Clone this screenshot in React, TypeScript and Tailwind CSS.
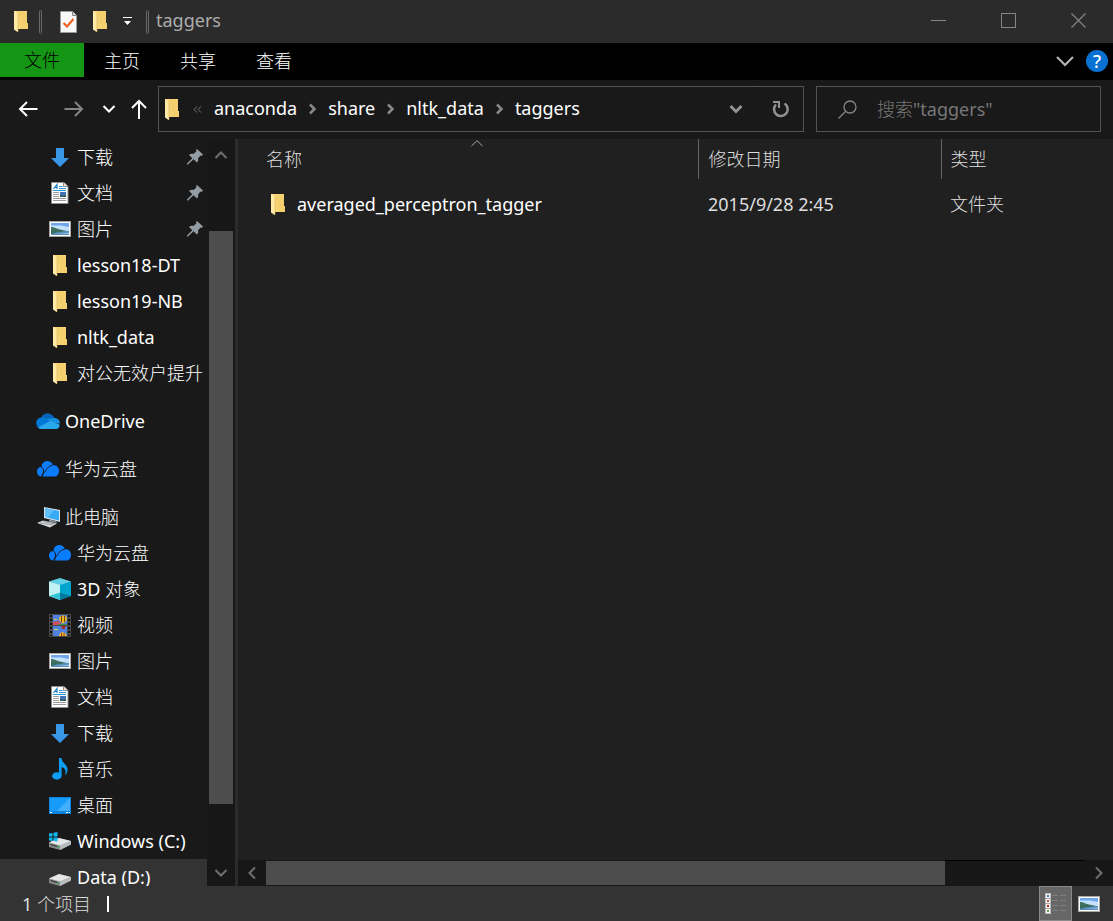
import React from "react";

type IconProps = { className?: string };

function FolderIcon() {
  return (
    <svg width="14" height="21" viewBox="0 0 14 21" aria-hidden="true">
      <path d="M1 0H13V12H14V18H1Z" fill="#f6d577" />
      <path d="M4 1H13V12H14V18H9Z" fill="#efc963" opacity="0.5" />
      <path d="M0 0H1L4 3V20.5L3.5 21L0 18.5Z" fill="#ffe9a6" />
      <path d="M4 3V20.5" stroke="#dcb455" strokeWidth="0.6" />
    </svg>
  );
}

function DownloadIcon() {
  return (
    <svg width="18" height="19" viewBox="0 0 18 19" aria-hidden="true">
      <path d="M5 0H13V10H18L9 19L0 10H5Z" fill="#3a97e8" />
    </svg>
  );
}

function DocumentIcon() {
  return (
    <svg width="18" height="22" viewBox="0 0 18 22" aria-hidden="true">
      <path d="M0.5 0.5H13L17 4.5V21.5H0.5Z" fill="#fff" stroke="#8d8d8d" />
      <path d="M12.5 0.5V4.5H16.5" fill="#e3e3e3" stroke="#8d8d8d" />
      <path d="M2.5 7L6 2.5V7M4 5.5H6" stroke="#1583c9" strokeWidth="1.2" fill="none" />
      <path d="M8 4.5H11.5M8 6.5H15M2 8.5H15" stroke="#2a93d8" strokeWidth="1" />
      <path d="M2 10.5H8M2 12.5H8M2 14.500H8M2 16.5H15M2 18.5H15" stroke="#9b9b9b" />
      <rect x="9" y="10" width="6" height="5" fill="#4273b5" />
      <path d="M9 13L12 14L15 13V15H9Z" fill="#2f5a48" />
    </svg>
  );
}

function PictureIcon() {
  return (
    <svg width="22" height="16" viewBox="0 0 22 16" aria-hidden="true">
      <rect x="0.5" y="0.5" width="21" height="15" fill="#fff" stroke="#a8a8a8" />
      <rect x="2" y="2" width="18" height="7" fill="#6ea7ee" />
      <path d="M2 4.500H12L20 6V10H2Z" fill="#c5e2fa" />
      <path d="M2 6C6 6 8 8.500 16 9.500L20 10.500H2Z" fill="#3f7262" />
      <rect x="2" y="10" width="18" height="4" fill="#568fbd" />
      <path d="M2 9H10L15 10.500L7 11.500L2 13Z" fill="#3c6c5c" />
      <path d="M8 13H20V11.500Z" fill="#8fbada" />
    </svg>
  );
}

function OneDriveIcon() {
  return (
    <svg width="24" height="16" viewBox="0 0 24 16" aria-hidden="true">
      <path d="M5 5C7-1 15-1.500 18.500 5L14 10L5 7Z" fill="#0364b8" />
      <path d="M18 5C22 5 24 7.500 24 10.500L13 10.500L10 6Z" fill="#1490df" />
      <path d="M5.500 4.500C9 4 11 5.500 14 9L3 15.200C-1 13-1 5 5.500 4.500Z" fill="#0078d4" />
      <path d="M14 8L23.500 11.500C24 14 22 16 19.500 16H5C4 16 3 15.500 2 14.500Z" fill="#28a8ea" />
    </svg>
  );
}

function HuaweiCloudIcon() {
  return (
    <svg width="22" height="16" viewBox="0 0 22 16" aria-hidden="true">
      <path
        d="M4.500 6C5-1 13.500-2 16 4C20 4 22 7 22 10C22 13.500 20 15.500 17 15.500H5C2 15.500 0 13.500 0 10.500C0 8 1.500 6 4.500 6Z"
        fill="#0a7dff"
      />
      <path
        d="M3.500 5.500C5.500 6.500 6.800 8 6.500 11L4.500 15.500M16 4C11 4.500 9.500 9 6.500 12.500L5 16"
        stroke="#191919"
        strokeWidth="1"
        fill="none"
      />
    </svg>
  );
}

function ComputerIcon() {
  return (
    <svg width="24" height="22" viewBox="0 0 24 22" aria-hidden="true">
      <path d="M8 1L24 4V16L8 12Z" fill="#d9e2e8" />
      <path d="M9 2L23 5V14.500L9 11Z" fill="#35abf5" />
      <path d="M9 2L18 4L12 11.700L9 11Z" fill="#7fcbfa" opacity="0.6" />
      <path d="M13 13.500L20 15L21 17L13 15.500Z" fill="#8b9399" />
      <path d="M1 17L7 14.500L21 17.500L14 21.500Z" fill="#d6d9dc" />
      <path d="M4 17L17 19M7 15.500L19 18" stroke="#858d93" strokeWidth="0.7" />
    </svg>
  );
}

function CubeIcon() {
  return (
    <svg width="22" height="22" viewBox="0 0 22 22" aria-hidden="true">
      <path d="M11 0L22 3.500L11 8L0 3.500Z" fill="#61d0e6" />
      <path d="M0 3.500L11 7V22L0 18Z" fill="#bff0f2" />
      <path d="M11 7L22 3.500V18L11 22Z" fill="#00a5cf" />
      <path d="M11 14.500L22 18L11 22Z" fill="#007a9c" />
      <path d="M11 14.500V22L0 18Z" fill="#36c3d6" />
    </svg>
  );
}

function VideoIcon() {
  return (
    <svg width="22" height="23" viewBox="0 0 22 23" aria-hidden="true">
      <rect width="22" height="23" fill="#4a4a4a" />
      <rect x="4" y="1" width="14" height="10" fill="#4f83df" />
      <rect x="4" y="12" width="14" height="10" fill="#4f83df" />
      <path d="M4 8L9 7L14 11H4Z" fill="#d34d5c" />
      <path d="M10 10H18V11H8Z" fill="#3b8f4b" />
      <path d="M10 4.500C10.500 0.500 17.500 0.500 18 4.500C18 7 16 8.500 14 9.500C12 8.500 10 7 10 4.500Z" fill="#e8ba22" />
      <path d="M12.500 2V8M15.500 2V8" stroke="#7d3817" />
      <path d="M12 12H17L15.500 15H13.500Z" fill="#a92820" />
      <path d="M10 22C10 17 17 17 17.500 22Z" fill="#edc02c" />
      <path d="M12.500 19V22M15 19V22" stroke="#a22c20" />
      <path d="M5 15.500H9M5 5.500H8" stroke="#d7d45c" strokeWidth="1" />
      <path d="M2 1V22M20 1V22" stroke="#111" strokeWidth="2" strokeDasharray="2 2" />
    </svg>
  );
}

function MusicIcon() {
  return (
    <svg width="16" height="22" viewBox="0 0 16 22" aria-hidden="true">
      <ellipse cx="4.800" cy="18" rx="4.800" ry="3.700" fill="#0c9df4" />
      <path d="M7 0H9.500C9.500 5 16 6.500 15.500 12C15.300 14.500 14.500 16 13 17.500C14.500 12.500 13 10 9.600 9V18H7Z" fill="#0c9df4" />
    </svg>
  );
}

function DesktopIcon() {
  return (
    <svg width="22" height="17" viewBox="0 0 22 17" aria-hidden="true">
      <rect width="22" height="17" fill="#0c83dc" />
      <rect x="1" y="1" width="20" height="13" fill="#169bfa" />
      <path d="M21 1V14H8Z" fill="#43b0ff" />
      <path d="M1 15.500H3M17 15.500H19M20 15.500H21" stroke="#fff" />
    </svg>
  );
}

function DriveIcon({ windows = false }: { windows?: boolean }) {
  return (
    <svg width="22" height="18" viewBox="0 0 22 18" aria-hidden="true">
      <path d="M0 10.500L10 6L22 9V12.500L11 18L0 15Z" fill="#858889" />
      <path d="M0 10.500L10 6L22 9L11 13.500Z" fill="#e4e6e8" />
      <path d="M11 13.500L22 9V12.500L11 18Z" fill="#b9bcbe" />
      <path d="M1.500 12.500L8 14.500" stroke="#303030" strokeWidth="1.200" />
      <path d="M8.500 15H10" stroke="#22b83a" strokeWidth="1.400" />
      {windows && (
        <path d="M0 1.500L3.500 1V4.500H0ZM4.500 0.800L8.500 0V4.500H4.500ZM0 5.500H3.500V9L0 8.500ZM4.500 5.500H8.500V9.500L4.500 9Z" fill="#12b9f0" />
      )}
    </svg>
  );
}

function PinIcon() {
  return (
    <svg width="16" height="16" viewBox="0 0 16 16" className="shrink-0" aria-hidden="true">
      <path d="M10 0L16 5.500L14.500 7L13.500 6.500L11 9.500C11.500 11 11 12.500 10 13.500L6.500 10.200L1 15.500L0 15.500V14.500L5.300 9.200L2 6C3.200 5 5 4.500 6.500 5L9.500 2.300L9 1Z" fill="#939ca3" />
    </svg>
  );
}

function Chevron({ className }: IconProps) {
  return (
    <svg width="14" height="14" viewBox="0 0 14 14" className={className} fill="none" stroke="currentColor" aria-hidden="true">
      <path d="M1.500 4L7 9.500L12.500 4" />
    </svg>
  );
}

function CrumbArrow() {
  return (
    <svg width="31" height="12" viewBox="0 0 31 12" fill="none" stroke="#898989" strokeWidth="2.500" aria-hidden="true">
      <path d="M13 1.500L17.500 6L13 10.500" />
    </svg>
  );
}

function ArrowIcon({ className }: IconProps) {
  return (
    <svg width="20" height="16" viewBox="0 0 20 16" className={className} fill="none" stroke="currentColor" strokeWidth="2" aria-hidden="true">
      <path d="M19.500 8H2M9 1L2 8L9 15" />
    </svg>
  );
}

function TitleDivider() {
  return <span className="h-6 w-[3px] rounded-sm border border-[#696969]" />;
}

type Item = { label: string; icon: React.ReactNode; root?: boolean; pinned?: boolean; active?: boolean };

const groups: Item[][] = [
  [
    { label: "下载", icon: <DownloadIcon />, pinned: true },
    { label: "文档", icon: <DocumentIcon />, pinned: true },
    { label: "图片", icon: <PictureIcon />, pinned: true },
    { label: "lesson18-DT", icon: <FolderIcon /> },
    { label: "lesson19-NB", icon: <FolderIcon /> },
    { label: "nltk_data", icon: <FolderIcon /> },
    { label: "对公无效户提升", icon: <FolderIcon /> },
  ],
  [{ label: "OneDrive", icon: <OneDriveIcon />, root: true }],
  [{ label: "华为云盘", icon: <HuaweiCloudIcon />, root: true }],
  [
    { label: "此电脑", icon: <ComputerIcon />, root: true },
    { label: "华为云盘", icon: <HuaweiCloudIcon /> },
    { label: "3D 对象", icon: <CubeIcon /> },
    { label: "视频", icon: <VideoIcon /> },
    { label: "图片", icon: <PictureIcon /> },
    { label: "文档", icon: <DocumentIcon /> },
    { label: "下载", icon: <DownloadIcon /> },
    { label: "音乐", icon: <MusicIcon /> },
    { label: "桌面", icon: <DesktopIcon /> },
    { label: "Windows (C:)", icon: <DriveIcon windows /> },
    { label: "Data (D:)", icon: <DriveIcon />, active: true },
  ],
];

function TreeItem({ item }: { item: Item }) {
  return (
    <li>
      <a
        href="#"
        className={
          "flex h-9 items-center gap-[5px] whitespace-nowrap text-white " +
          (item.root ? "pl-9 " : "pl-12 ") +
          (item.active ? "bg-[#333333]" : "")
        }
      >
        <span className="flex w-6 shrink-0 items-center justify-center">{item.icon}</span>
        <span className="flex-1">{item.label}</span>
        {item.pinned && (
          <span className="pr-1">
            <PinIcon />
          </span>
        )}
      </a>
    </li>
  );
}

function TitleBar() {
  return (
    <header className="flex h-[43px] shrink-0 items-center bg-[#2b2b2b] pl-[14px]">
      <FolderIcon />
      <span className="ml-[11px] flex">
        <TitleDivider />
      </span>
      <button aria-label="属性" className="ml-[18px]">
        <svg width="17" height="22" viewBox="0 0 17 22" aria-hidden="true">
          <path d="M0.500 0.500H12.500L16.500 4.500V21.500H0.500Z" fill="#f8f8f8" stroke="#9a9a9a" />
          <path d="M12.500 0.500V4.500H16.500" fill="#ddd" stroke="#858585" />
          <path d="M3.500 12L7 15.500L13.500 8" stroke="#f05a1a" strokeWidth="2" fill="none" />
        </svg>
      </button>
      <button aria-label="新建文件夹" className="ml-4">
        <FolderIcon />
      </button>
      <button aria-label="自定义快速访问工具栏" className="ml-4 mr-[14px]">
        <svg width="9" height="9" viewBox="0 0 9 9" aria-hidden="true">
          <path d="M0 0.500H9" stroke="#fff" />
          <path d="M1 4H8L4.500 8Z" fill="#fff" />
        </svg>
      </button>
      <TitleDivider />
      <h1 className="ml-[7px] flex-1 pb-1 text-[#adadad]">taggers</h1>
      <div className="flex self-stretch pb-0.5 text-[#858585]">
        <button aria-label="最小化" className="flex w-[70px] items-center justify-center">
          <svg width="15" height="15" viewBox="0 0 15 15" stroke="currentColor" aria-hidden="true"><path d="M0 7.500H15" /></svg>
        </button>
        <button aria-label="最大化" className="flex w-[70px] items-center justify-center">
          <svg width="15" height="15" viewBox="0 0 15 15" fill="none" stroke="currentColor" aria-hidden="true"><rect x="0.500" y="0.500" width="14" height="14" /></svg>
        </button>
        <button aria-label="关闭" className="flex w-[70px] items-center justify-center">
          <svg width="15" height="15" viewBox="0 0 15 15" stroke="currentColor" strokeWidth="1.200" aria-hidden="true"><path d="M0.500 0.500L14.500 14.500M14.500 0.500L0.500 14.500" /></svg>
        </button>
      </div>
    </header>
  );
}

function Ribbon() {
  return (
    <nav className="flex h-[37px] shrink-0 items-start bg-black text-white">
      <button className="h-[34px] w-[84px] bg-[#149614] text-black">文件</button>
      {["主页", "共享", "查看"].map((tab) => (
        <button key={tab} className="h-9 w-[76px]">{tab}</button>
      ))}
      <div className="ml-auto flex h-9 items-center gap-3 pr-[5px]">
        <button aria-label="展开功能区">
          <svg width="18" height="12" viewBox="0 0 18 12" fill="none" stroke="#b4b4b4" strokeWidth="2.200" aria-hidden="true"><path d="M1 2L9 10L17 2" /></svg>
        </button>
        <button aria-label="帮助" className="flex h-[22px] w-[22px] items-center justify-center rounded-full bg-[#0871d1] font-medium">?</button>
      </div>
    </nav>
  );
}

function AddressBar() {
  const crumbs = ["anaconda", "share", "nltk_data", "taggers"];
  return (
    <div className="flex h-[59px] shrink-0 items-start bg-[#191919] pr-3 pt-[6px]">
      <div className="flex h-[46px] w-[158px] shrink-0 items-center pl-[5px] text-white">
        <button aria-label="后退" className="flex w-[46px] justify-center"><ArrowIcon /></button>
        <button aria-label="前进" className="flex w-[46px] justify-center"><ArrowIcon className="rotate-180 text-[#858585]" /></button>
        <button aria-label="最近浏览的位置" className="flex w-[23px] justify-center"><Chevron className="stroke-2" /></button>
        <button aria-label="上移" className="flex flex-1 justify-center">
          <svg width="16" height="20" viewBox="0 0 16 20" fill="none" stroke="currentColor" strokeWidth="2" aria-hidden="true"><path d="M8 20V2M1 9L8 2L15 9" /></svg>
        </button>
      </div>
      <div className="flex h-[46px] min-w-0 flex-1 items-center border border-[#535353] pl-[6px] text-white">
        <FolderIcon />
        <svg width="9" height="7" viewBox="0 0 9 7" className="ml-[14px] mr-3" fill="none" stroke="#777777" aria-hidden="true">
          <path d="M4 0.500L1 3.500L4 6.500M8 0.500L5 3.500L8 6.500" />
        </svg>
        {crumbs.map((crumb, i) => (
          <React.Fragment key={crumb}>
            {i > 0 && <CrumbArrow />}
            <button className="pb-0.5">{crumb}</button>
          </React.Fragment>
        ))}
        <button aria-label="以前的位置" className="ml-auto flex h-full w-11 items-center justify-center border-r border-[#151515] text-[#929292]">
          <Chevron className="stroke-3" />
        </button>
        <button aria-label="刷新" className="flex h-full w-[45px] items-center justify-center">
          <svg width="18" height="18" viewBox="0 0 18 18" fill="none" stroke="#929292" strokeWidth="2.500" aria-hidden="true">
            <path d="M12.500 3.500A6.800 6.800 0 1 1 4 4.500" />
            <path d="M1 2H7V8" strokeWidth="2" />
          </svg>
        </button>
      </div>
      <label className="ml-3 flex h-[46px] w-[285px] items-center border border-[#535353] pl-[21px]">
        <svg width="19" height="19" viewBox="0 0 19 19" fill="none" stroke="#858585" strokeWidth="1.300" aria-hidden="true">
          <circle cx="12" cy="7" r="6" />
          <path d="M7.500 11.500L0.500 18.500" />
        </svg>
        <input
          type="search"
          aria-label="搜索"
          placeholder={'搜索"taggers"'}
          className="ml-5 min-w-0 flex-1 bg-transparent text-white outline-none placeholder:text-[#777777]"
        />
      </label>
    </div>
  );
}

function Sidebar() {
  return (
    <aside className="flex w-[238px] shrink-0 border-r-[3px] border-[#2b2b2b] bg-[#191919]">
      <nav className="w-[207px] overflow-hidden">
        <div className="flex flex-col gap-3">
          {groups.map((group, i) => (
            <ul key={i}>
              {group.map((item) => (
                <TreeItem key={item.label} item={item} />
              ))}
            </ul>
          ))}
        </div>
      </nav>
      <div className="flex w-7 flex-col items-center bg-[#171717] text-[#707070]">
        <button aria-label="向上滚动" className="flex h-8 items-center"><Chevron className="rotate-180 stroke-2" /></button>
        <div className="grow-[60]" />
        <div className="w-6 grow-[573] bg-[#4d4d4d]" />
        <div className="grow-[56]" />
        <button aria-label="向下滚动" className="flex h-[26px] items-center"><Chevron className="stroke-2" /></button>
      </div>
    </aside>
  );
}

function FileList() {
  return (
    <main className="flex min-w-0 flex-1 flex-col bg-[#202020]">
      <div className="flex-1 overflow-hidden pl-[18px]">
        <table className="w-full table-fixed border-collapse text-left">
          <colgroup>
            <col className="w-[442px]" />
            <col className="w-[243px]" />
            <col />
          </colgroup>
          <thead className="text-[#dedede]">
            <tr className="h-10">
              <th className="relative border-r border-[#636363] pl-[10px] font-normal">
                名称
                <svg width="12" height="7" viewBox="0 0 12 7" className="absolute left-1/2 top-px -translate-x-1/2" fill="none" stroke="#aaaaaa" aria-hidden="true">
                  <path d="M0.500 6L6 0.700L11.500 6" />
                </svg>
              </th>
              <th className="border-r border-[#636363] pl-[10px] font-normal">修改日期</th>
              <th className="pl-[9px] font-normal">类型</th>
            </tr>
          </thead>
          <tbody>
            <tr className="h-[50px] text-[#dedede]">
              <td className="pl-[15px]">
                <a href="#" className="flex items-center gap-3 text-white">
                  <FolderIcon />
                  averaged_perceptron_tagger
                </a>
              </td>
              <td className="pl-[10px]">2015/9/28 2:45</td>
              <td className="pl-[9px]">文件夹</td>
            </tr>
          </tbody>
        </table>
      </div>
      <div className="flex h-[26px] shrink-0 items-center bg-[#171717] text-[#707070]">
        <button aria-label="向左滚动" className="flex w-7 justify-center"><Chevron className="rotate-90 stroke-2" /></button>
        <div className="h-6 grow-[679] bg-[#4d4d4d]" />
        <div className="grow-[140] self-start border-t border-black" />
        <button aria-label="向右滚动" className="flex w-7 justify-center"><Chevron className="-rotate-90 stroke-2" /></button>
      </div>
    </main>
  );
}

function StatusBar() {
  const thumbs = ["#3f7fb5", "#c0504d", "#d02020", "#6fa04a"];
  return (
    <footer className="flex h-[35px] shrink-0 items-center bg-[#333333] pl-[22px] pr-2 text-[#dddddd]">
      <span>1 个项目</span>
      <span className="ml-4 h-4 w-0.5 bg-white" />
      <button aria-label="详细信息" className="ml-auto flex h-full w-[33px] items-center justify-center border border-[#8a8a8a] bg-[#666666]">
        <svg width="21" height="21" viewBox="0 0 21 21" aria-hidden="true">
          <rect width="6" height="21" fill="#f4f4f4" />
          {thumbs.map((color, i) => (
            <g key={color}>
              <rect x="0.500" y={i * 5 + 0.500} width="5" height="5" fill="none" stroke="#9a9a9a" strokeWidth="0.600" />
              <rect x="2" y={i * 5 + 2} width="2" height="2" fill={color} />
              <path d={`M7 ${i * 5 + 2.500}H13M15 ${i * 5 + 2.500}H21`} stroke="#808080" />
            </g>
          ))}
        </svg>
      </button>
      <button aria-label="大缩略图" className="flex h-full w-[33px] items-center justify-center"><PictureIcon /></button>
    </footer>
  );
}

export default function App() {
  return (
    <div className="flex h-screen flex-col overflow-hidden bg-[#191919] font-['Noto_Sans','Noto_Sans_CJK_SC_Light','Noto_Sans_CJK_SC',sans-serif] text-[18px] leading-6 font-normal">
      <TitleBar />
      <Ribbon />
      <AddressBar />
      <div className="flex min-h-0 flex-1">
        <Sidebar />
        <FileList />
      </div>
      <StatusBar />
    </div>
  );
}
